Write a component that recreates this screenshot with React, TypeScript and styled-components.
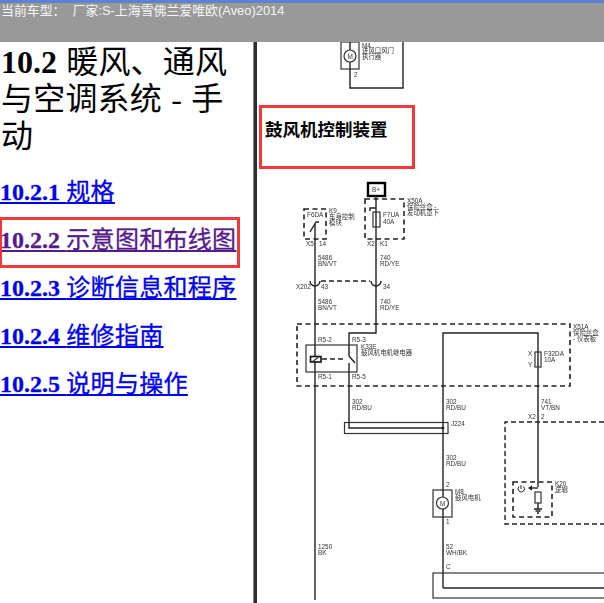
import styled, { createGlobalStyle } from 'styled-components'

const Global = createGlobalStyle`
  html, body {
    margin: 0;
    padding: 0;
    background: #fff;
    overflow: hidden;
  }
`

const sections = [
  { num: '10.2.1', title: '规格' },
  { num: '10.2.2', title: '示意图和布线图', visited: true },
  { num: '10.2.3', title: '诊断信息和程序' },
  { num: '10.2.4', title: '维修指南' },
  { num: '10.2.5', title: '说明与操作' },
]

// x, y, text of every small label on the wiring diagram
const labels: [number, number, string][] = [
  [307, 217, 'F6DA'], [329, 213, 'K9'], [329, 219, '车身控制'], [329, 225, '模块'],
  [383, 217, 'F7UA'], [383, 224, '40A'], [407, 203, 'X50A'], [407, 209, '保险丝盒 -'], [407, 215, '发动机罩下'],
  [306, 246, 'X5'], [319, 246, '14'], [367, 246, 'X2'], [380, 246, 'K1'],
  [318, 260, '5486'], [318, 266, 'BN/VT'], [380, 260, '740'], [380, 266, 'RD/YE'],
  [296, 289, 'X202'], [321, 289, '43'], [383, 289, '34'],
  [318, 304, '5486'], [318, 310, 'BN/VT'], [380, 304, '740'], [380, 310, 'RD/YE'],
  [318, 342, 'R5-2'], [352, 342, 'R5-3'], [318, 379, 'R5-1'], [352, 379, 'R5-5'],
  [361, 349, 'K33E'], [361, 355, '鼓风机电机继电器'],
  [573, 329, 'X51A'], [573, 335, '保险丝盒'], [573, 341, '- 仪表板'],
  [528, 356, 'X'], [528, 367, 'Y'], [544, 356, 'F32DA'], [544, 362, '10A'],
  [352, 404, '302'], [352, 410, 'RD/BU'], [446, 404, '302'], [446, 410, 'RD/BU'],
  [541, 404, '741'], [541, 410, 'VT/BN'], [528, 419, 'X2'], [541, 419, '2'], [451, 426, 'J224'],
  [446, 460, '302'], [446, 466, 'RD/BU'], [446, 487, '2'], [455, 494, 'M8'], [455, 500, '鼓风电机'],
  [446, 524, '1'], [318, 549, '1250'], [318, 555, 'BK'], [446, 549, '52'], [446, 555, 'WH/BK'], [446, 569, 'C'],
  [555, 486, 'K20'], [555, 492, '逻辑'],
]

export default function App() {
  return (
    <Page>
      <Global />
      <TopBar>当前车型：&nbsp;&nbsp;厂家:S-上海雪佛兰爱唯欧(Aveo)2014</TopBar>
      <Content>
        <Sidebar>
          <PageTitle>
            <b>10.2</b> 暖风、通风与空调系统 - 手动
          </PageTitle>
          <SectionList>
            {sections.map(s => (
              <SectionRow key={s.num} $marked={s.visited}>
                <SectionLink href="#" $visited={s.visited}>
                  <b>{s.num}</b> {s.title}
                </SectionLink>
              </SectionRow>
            ))}
          </SectionList>
        </Sidebar>
        <Viewer>
          <TopFigure viewBox="257 42 347 63">
            <Line d="M350 42V88H403V42" />
            <Thin x="341" y="42" width="18" height="27" />
            <circle cx="350" cy="56" r="6" fill="#fff" stroke="#333" strokeWidth="1.2" />
            <SmallText x="347.5" y="58.5">M</SmallText>
            <SmallText x="354" y="77">2</SmallText>
            <SmallText x="362" y="47.5">M4</SmallText>
            <SmallText x="362" y="53">进风口风门</SmallText>
            <SmallText x="362" y="59">执行器</SmallText>
          </TopFigure>
          <DiagramHeading>鼓风机控制装置</DiagramHeading>
          <Diagram viewBox="257 169 347 434">
            {/* B+ and fuse block */}
            <rect x="368" y="183" width="17" height="13" fill="#fff" stroke="#000" strokeWidth="2.4" />
            <SmallText x="372" y="192">B+</SmallText>
            <Dashed x="365" y="199" width="39" height="40" />
            <Dashed x="304" y="209" width="22" height="30" />
            <Line d="M376 196V333H349V356" />
            <Line d="M370 211V208H376" />
            <Thin x="373" y="212" width="7" height="15" fill="#fff" />
            {/* left switch and wire */}
            <Line d="M315 224V600" />
            <Line d="M310 232L316 222H319" />
            {/* inline connector */}
            <Line d="M310 281A5 5 0 0 0 320 281M371 281A5 5 0 0 0 381 281" />
            <DashLine d="M321 281H370" />
            {/* fuse block X51A */}
            <Dashed x="297" y="324" width="273" height="62" />
            <Thin x="306" y="345" width="51" height="27" />
            <rect x="310.5" y="356.5" width="10.5" height="5.5" fill="#fff" stroke="#111" strokeWidth="1.6" />
            <Thin as="path" d="M312 362L320 356" />
            <DashLine d="M322 359H346" />
            <Line d="M349 356L355 363M349 363V428H443" />
            <Line d="M443 588V333H538V487" />
            <Line d="M443 588H604" />
            <Thin x="535" y="352" width="6" height="15" fill="#fff" />
            {/* splice J224 */}
            <Thin x="344.5" y="422.5" width="103.5" height="11" />
            <circle cx="443" cy="428" r="1.4" fill="#222" />
            {/* blower motor */}
            <Thin x="433" y="490" width="19" height="27" />
            <circle cx="442.5" cy="503" r="6" fill="#fff" stroke="#333" strokeWidth="1.2" />
            <SmallText x="440" y="505.5">M</SmallText>
            {/* logic module */}
            <DashLine d="M604 422H505V524H604" />
            <Dashed x="513" y="482" width="39" height="35" />
            <path d="M519 486.5A3.2 3.2 0 1 0 523.5 486.5M521 485V489" fill="none" stroke="#222" strokeWidth="1" />
            <path d="M528 488L532 485.5V490.5Z" fill="#111" />
            <Line d="M531 488H538" />
            <Thin x="535" y="492" width="6" height="11" fill="#fff" />
            <Line d="M538 503V509M534 509H542M535.5 511H540.5M537 513H539" />
            {/* body module at the bottom */}
            <Thin x="433" y="573" width="180" height="25" />
            {labels.map(([x, y, text]) => (
              <SmallText key={`${x}-${y}`} x={x} y={y}>{text}</SmallText>
            ))}
          </Diagram>
        </Viewer>
      </Content>
    </Page>
  )
}

const Page = styled.div`
  width: 604px;
  height: 603px;
  display: flex;
  flex-direction: column;
  overflow: hidden;
`

const TopBar = styled.div`
  height: 39px;
  flex: none;
  border-top: 3px solid #5f81d2;
  background: #999;
  color: #f6f6f6;
  font: 12.9px/15px 'Liberation Sans', 'Noto Sans CJK SC', sans-serif;
  padding-left: 1px;
`

const Content = styled.div`
  flex: 1;
  display: flex;
  min-height: 0;
`

const Sidebar = styled.div`
  width: 254px;
  flex: none;
  box-sizing: border-box;
  padding-top: 2px;
  border-right: 1px solid #888;
  font-family: 'Liberation Serif', 'Noto Sans CJK SC', serif;
`

const PageTitle = styled.h1`
  margin: 0 0 0 1px;
  width: 240px;
  font-size: 32px;
  line-height: 37px;
  font-weight: 400;
  color: #000;
  word-spacing: 1px;
  letter-spacing: 0.2px;
  b {
    font-weight: 700;
    letter-spacing: 0;
  }
`

const SectionList = styled.div`
  margin-top: 13px;
  display: flex;
  flex-direction: column;
`

const SectionRow = styled.div<{ $marked?: boolean }>`
  height: 48px;
  position: relative;
  line-height: 48px;
  ${p => p.$marked && `
    &::after {
      content: '';
      position: absolute;
      left: -1px;
      top: 1px;
      width: 241px;
      height: 51px;
      box-sizing: border-box;
      border: 3px solid #f23a3a;
    }
  `}
`

const SectionLink = styled.a<{ $visited?: boolean }>`
  font-size: 24px;
  font-weight: 400;
  white-space: nowrap;
  letter-spacing: 0.3px;
  color: ${p => (p.$visited ? '#551a8b' : '#0000ee')};
  text-decoration: underline;
  -webkit-text-stroke: 0.3px currentColor;
  b {
    letter-spacing: 0;
  }
`

const Viewer = styled.div`
  flex: 1;
  min-width: 0;
  display: flex;
  flex-direction: column;
  border-left: 3px solid #2e2e2e;
`

const TopFigure = styled.svg`
  display: block;
  flex: none;
  width: 347px;
  height: 63px;
  filter: blur(0.4px);
`

const DiagramHeading = styled.div`
  flex: none;
  width: 156px;
  height: 64px;
  margin-left: 2px;
  box-sizing: border-box;
  border: 3px solid #f23a3a;
  padding: 10px 0 0 3px;
  color: #000;
  font: 700 17.5px/24px 'Liberation Serif', 'Noto Sans CJK SC', serif;
  white-space: nowrap;
`

const Diagram = styled.svg`
  display: block;
  flex: none;
  width: 347px;
  height: 434px;
  filter: blur(0.4px);
`

const Line = styled.path`
  fill: none;
  stroke: #222;
  stroke-width: 1.4;
`

const DashLine = styled.path`
  fill: none;
  stroke: #222;
  stroke-width: 1.4;
  stroke-dasharray: 5 3;
`

const Thin = styled.rect`
  fill: none;
  stroke: #333;
  stroke-width: 1.2;
`

const Dashed = styled.rect`
  fill: none;
  stroke: #222;
  stroke-width: 1.6;
  stroke-dasharray: 5 3.5;
`

const SmallText = styled('text')`
  font: 6.4px 'Liberation Sans', 'Noto Sans CJK SC', sans-serif;
  fill: #333;
`
